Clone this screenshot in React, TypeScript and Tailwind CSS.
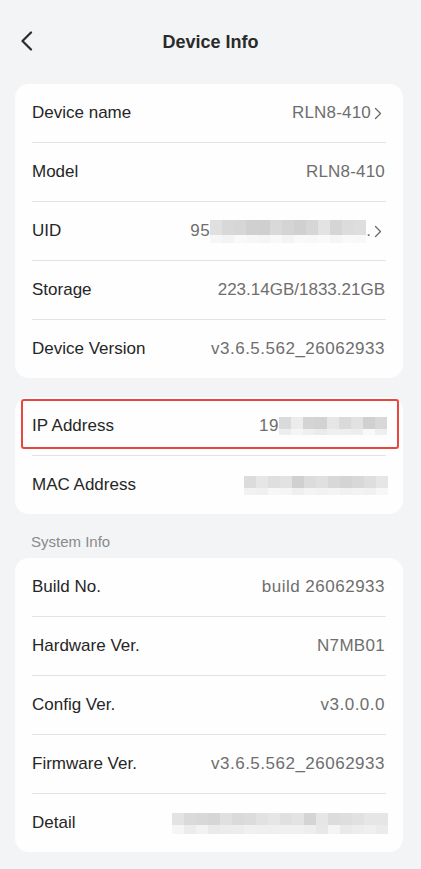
import React from "react";

const FONT = { fontFamily: '"Liberation Sans", Arial, sans-serif' };

function Blur({
  top,
  bottom,
  topH,
  bottomH,
}: {
  top: string[];
  bottom: string[];
  topH: number;
  bottomH: number;
}) {
  return (
    <div className="flex flex-col">
      <div className="flex">
        {top.map((c, i) => (
          <div key={i} style={{ width: 12, height: topH, background: c }} />
        ))}
      </div>
      <div className="flex">
        {bottom.map((c, i) => (
          <div key={i} style={{ width: 12, height: bottomH, background: c }} />
        ))}
      </div>
    </div>
  );
}

function Chevron() {
  return (
    <svg width="8" height="13" viewBox="0 0 8 13" className="ml-[3px] mr-[3px]">
      <path d="M1.5 1.5 L6.5 6.5 L1.5 11.5" fill="none" stroke="#666" strokeWidth="1.2" strokeLinecap="round" strokeLinejoin="round" />
    </svg>
  );
}

function Row({
  label,
  children,
  last,
  extra,
}: {
  label: string;
  children: React.ReactNode;
  last?: boolean;
  extra?: React.ReactNode;
}) {
  return (
    <div className="relative">
      {extra}
      <div className="flex h-[58px] items-center justify-between pl-[17px] pr-[18px]">
        <span className="text-[17px] text-[#262626]">{label}</span>
        <div className="flex items-center text-[17px] text-[#6e6e6e]">{children}</div>
      </div>
      {!last && <div className="mx-[17px] h-px bg-[#e3e3e3]" />}
    </div>
  );
}

export default function App() {
  const g = (arr: string[]) => arr;
  return (
    <div className="min-h-[869px] w-[421px] bg-[#f3f4f6] pb-[18px]" style={FONT}>
      <div className="relative flex h-[84px] items-center justify-center">
        <svg width="14" height="20" viewBox="0 0 14 20" className="absolute left-[20px] top-[31px]">
          <path d="M11 1.5 L2.5 10 L11 18.5" fill="none" stroke="#2b2b2b" strokeWidth="2.2" strokeLinecap="round" strokeLinejoin="round" />
        </svg>
        <span className="text-[18px] font-bold text-[#2a2a2a]">Device Info</span>
      </div>

      <div className="ml-[15px] w-[388px] rounded-[14px] bg-[#fefefe]">
        <Row label="Device name">
          <span className="tracking-[0.2px]">RLN8-410</span>
          <Chevron />
        </Row>
        <Row label="Model">
          <span className="tracking-[0.2px]">RLN8-410</span>
        </Row>
        <Row label="UID">
          <span className="tracking-[0.5px]">95</span>
          <Blur
            topH={15}
            bottomH={8}
            top={g(["#e0e0e0", "#d8d8d8", "#d6d6d6", "#d0d0d0", "#cfcfcf", "#d9d9d9", "#d4d4d4", "#d0d0d0", "#d6d6d6", "#e3e3e3", "#d5d5d5", "#dcdcdc", "#dedede"])}
            bottom={g(["#f6f6f6", "#f3f3f3", "#f9f9f9", "#f7f7f7", "#f5f5f5", "#f8f8f8", "#f4f4f4", "#f9f9f9", "#f8f8f8", "#fafafa", "#f6f6f6", "#f9f9f9", "#f8f8f8"])}
          />
          <span>.</span>
          <Chevron />
        </Row>
        <Row label="Storage">
          <span>223.14GB/1833.21GB</span>
        </Row>
        <Row label="Device Version" last>
          <span className="tracking-[0.5px]">v3.6.5.562_26062933</span>
        </Row>
      </div>

      <div className="mt-[19px] ml-[15px] w-[388px] rounded-[14px] bg-[#fefefe]">
        <Row
          label="IP Address"
          extra={
            <div className="absolute left-[6px] top-[2px] h-[50px] w-[378px] rounded-[3px] border-2 border-[#e9473d]" />
          }
        >
          <span className="tracking-[0.5px]">19</span>
          <div className="mr-[-2px]">
            <Blur
              topH={12}
              bottomH={6}
              top={g(["#dadada", "#ececec", "#d4d4d4", "#d2d2d2", "#e6e6e6", "#dadada", "#e2e2e2", "#d0d0d0", "#d8d8d8"])}
              bottom={g(["#ededed", "#f5f5f5", "#efefef", "#ebebeb", "#efefef", "#efefef", "#ededed", "#f9f9f9", "#efefef"])}
            />
          </div>
        </Row>
        <Row label="MAC Address" last>
          <div className="mr-[-3px]">
            <Blur
              topH={12}
              bottomH={7}
              top={g(["#dcdcdc", "#e6e6e6", "#dfdfdf", "#e2e2e2", "#d0d0d0", "#dcdcdc", "#e0e0e0", "#d8d8d8", "#d4d4d4", "#d8d8d8", "#dedede", "#e6e6e6"])}
              bottom={g(["#f2f2f2", "#f0f0f0", "#f7f7f7", "#f5f5f5", "#efefef", "#f4f4f4", "#f2f2f2", "#f4f4f4", "#f1f1f1", "#f3f3f3", "#f1f1f1", "#f7f7f7"])}
            />
          </div>
        </Row>
      </div>

      <div className="pl-[31px] pt-[18px] pb-[6px] text-[15px] leading-[20px] text-[#8a8a8a]">System Info</div>

      <div className="ml-[15px] w-[388px] rounded-[14px] bg-[#fefefe]">
        <Row label="Build No.">
          <span className="tracking-[0.5px]">build 26062933</span>
        </Row>
        <Row label="Hardware Ver.">
          <span className="tracking-[0.3px]">N7MB01</span>
        </Row>
        <Row label="Config Ver.">
          <span className="tracking-[0.5px]">v3.0.0.0</span>
        </Row>
        <Row label="Firmware Ver.">
          <span className="tracking-[0.5px]">v3.6.5.562_26062933</span>
        </Row>
        <Row label="Detail" last>
          <div className="mr-[-3px]">
            <Blur
              topH={12}
              bottomH={9}
              top={g(["#e3e3e3", "#dadada", "#d8d8d8", "#d6d6d6", "#e0e0e0", "#dadada", "#dcdcdc", "#e2e2e2", "#e6e6e6", "#e0e0e0", "#e3e3e3", "#d4d4d4", "#e6e6e6", "#dcdcdc", "#dedede", "#e1e1e1", "#e6e6e6", "#e6e6e6"])}
              bottom={g(["#f5f5f5", "#ececec", "#f2f2f2", "#eaeaea", "#ececec", "#ededed", "#f0f0f0", "#efefef", "#efefef", "#f0f0f0", "#f0f0f0", "#eeeeee", "#e8e8e8", "#f4f4f4", "#eaeaea", "#ededed", "#efefef", "#ebebeb"])}
            />
          </div>
        </Row>
      </div>
    </div>
  );
}
